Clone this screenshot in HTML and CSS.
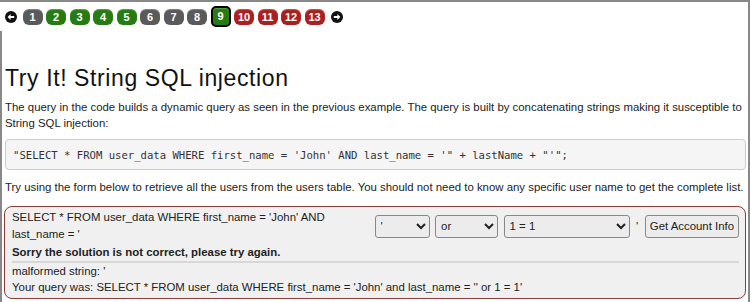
FILE: index.html
```html
<!DOCTYPE html>
<html>
<head>
  <title>String SQL injection</title>
  <link rel="stylesheet" href="styles.css">
</head>
<body>
  <div class="page">
    <!-- Navegacion de pasos -->
    <div class="pasos">
      <svg class="flecha" viewBox="0 0 12 12" width="12" height="12">
        <circle cx="6" cy="6" r="6" fill="#111"/>
        <path d="M2.6 6 L5.6 3 L5.6 4.9 L9.2 4.9 L9.2 7.1 L5.6 7.1 L5.6 9 Z" fill="#fff"/>
      </svg>
      <span class="paso gris">1</span>
      <span class="paso verde">2</span>
      <span class="paso verde">3</span>
      <span class="paso verde">4</span>
      <span class="paso verde">5</span>
      <span class="paso gris">6</span>
      <span class="paso gris">7</span>
      <span class="paso gris">8</span>
      <span class="paso verde actual">9</span>
      <span class="paso rojo">10</span>
      <span class="paso rojo">11</span>
      <span class="paso rojo">12</span>
      <span class="paso rojo">13</span>
      <svg class="flecha derecha" viewBox="0 0 12 12" width="12" height="12">
        <circle cx="6" cy="6" r="6" fill="#111"/>
        <path d="M9.4 6 L6.4 3 L6.4 4.9 L2.8 4.9 L2.8 7.1 L6.4 7.1 L6.4 9 Z" fill="#fff"/>
      </svg>
    </div>

    <div class="contenido">
      <h1>Try It! String SQL injection</h1>
      <p>The query in the code builds a dynamic query as seen in the previous example. The query is built by concatenating strings making it susceptible to String SQL injection:</p>

      <pre class="codigo">"SELECT * FROM user_data WHERE first_name = 'John' AND last_name = '" + lastName + "'";</pre>

      <p class="instruccion">Try using the form below to retrieve all the users from the users table. You should not need to know any specific user name to get the complete list.</p>

      <div class="formulario">
        <div class="fila">
          <div class="consulta">SELECT * FROM user_data WHERE first_name = 'John' AND last_name = '</div>
          <div class="controles">
            <select class="sel-1">
              <option>'</option>
            </select>
            <select class="sel-2">
              <option>or</option>
            </select>
            <select class="sel-3">
              <option>1 = 1</option>
            </select>
            <span class="comilla">'</span>
            <button>Get Account Info</button>
          </div>
        </div>
        <div class="aviso">Sorry the solution is not correct, please try again.</div>
        <div class="salida">
          malformed string: '<br>
          Your query was: SELECT * FROM user_data WHERE first_name = 'John' and last_name = '' or 1 = 1'
        </div>
      </div>
    </div>
  </div>
</body>
</html>
```

FILE: styles.css
```css
html, body {
  margin: 0;
  height: 100%;
  overflow: hidden;
}
body {
  font-family: "Liberation Sans", Arial, sans-serif;
  color: #222;
  background-color: #fff;
}
.page {
  box-sizing: border-box;
  height: 100%;
  display: flex;
  flex-direction: column;
  border-top: 2px solid #888;
  border-right: 2px solid #888;
}
.pasos {
  display: flex;
  align-items: center;
  gap: 3.5px;
  padding: 0 0 0 5px;
  height: 29px;
  flex-shrink: 0;
}
.flecha {
  margin-right: 2px;
}
.derecha {
  margin: 0 0 0 3px;
}
.paso {
  box-sizing: border-box;
  min-width: 20px;
  height: 16px;
  padding: 0 3px;
  border-radius: 6px;
  color: #fff;
  font-size: 11px;
  font-weight: bold;
  line-height: 16px;
  text-align: center;
  box-shadow: inset 0 1px 1px rgba(255, 255, 255, 0.25);
}
.gris {
  background-color: #5a5a5a;
}
.verde {
  background-color: #267c12;
}
.rojo {
  background-color: #ab1f1f;
}
.actual {
  height: 21px;
  border: 2px solid #000;
  border-radius: 5px;
  line-height: 17px;
}
.contenido {
  flex: 1;
  border-left: 2px solid #888;
  padding: 33px 2px 0 2px;
}
h1 {
  font-size: 23px;
  line-height: 28px;
  font-weight: normal;
  letter-spacing: 0.6px;
  margin: 0 0 7px 1px;
  color: #111;
}
p {
  font-size: 11.4px;
  line-height: 16px;
  margin: 0 0 8px 1px;
}
.codigo {
  font-family: "DejaVu Sans Mono", monospace;
  font-size: 10.6px;
  line-height: 13px;
  background-color: #f5f5f5;
  border: 1px solid #ccc;
  border-radius: 4px;
  margin: 0 0 9px 1px;
  padding: 9px 7px 7px 7px;
  color: #333;
}
.instruccion {
  margin-bottom: 11px;
}
.formulario {
  background-color: #f0f0f0;
  border: 1.5px solid #8e3b3b;
  border-radius: 8px;
  padding: 2px 6px 3px 6px;
  font-size: 11.4px;
}
.fila {
  display: flex;
  align-items: center;
  justify-content: space-between;
}
.consulta {
  width: 340px;
  line-height: 17px;
  padding-left: 1px;
}
.controles {
  display: flex;
  align-items: center;
  gap: 5.5px;
}
select, button {
  font-family: "Liberation Sans", Arial, sans-serif;
  font-size: 11.4px;
  height: 23px;
  border: 1px solid #888;
  border-radius: 3px;
  background-color: #ececec;
  color: #222;
}
select {
  padding-left: 1px;
}
.sel-1 {
  width: 55px;
}
.sel-2 {
  width: 63px;
}
.sel-3 {
  width: 126px;
}
.comilla {
  margin: 0 1px;
}
button {
  padding: 0 4px;
}
.aviso {
  font-weight: bold;
  margin: 1px 0 0 1px;
  line-height: 16px;
  padding-bottom: 1px;
  border-bottom: 2px solid #d8d8d8;
}
.salida {
  line-height: 16px;
  padding-left: 1px;
}
```
